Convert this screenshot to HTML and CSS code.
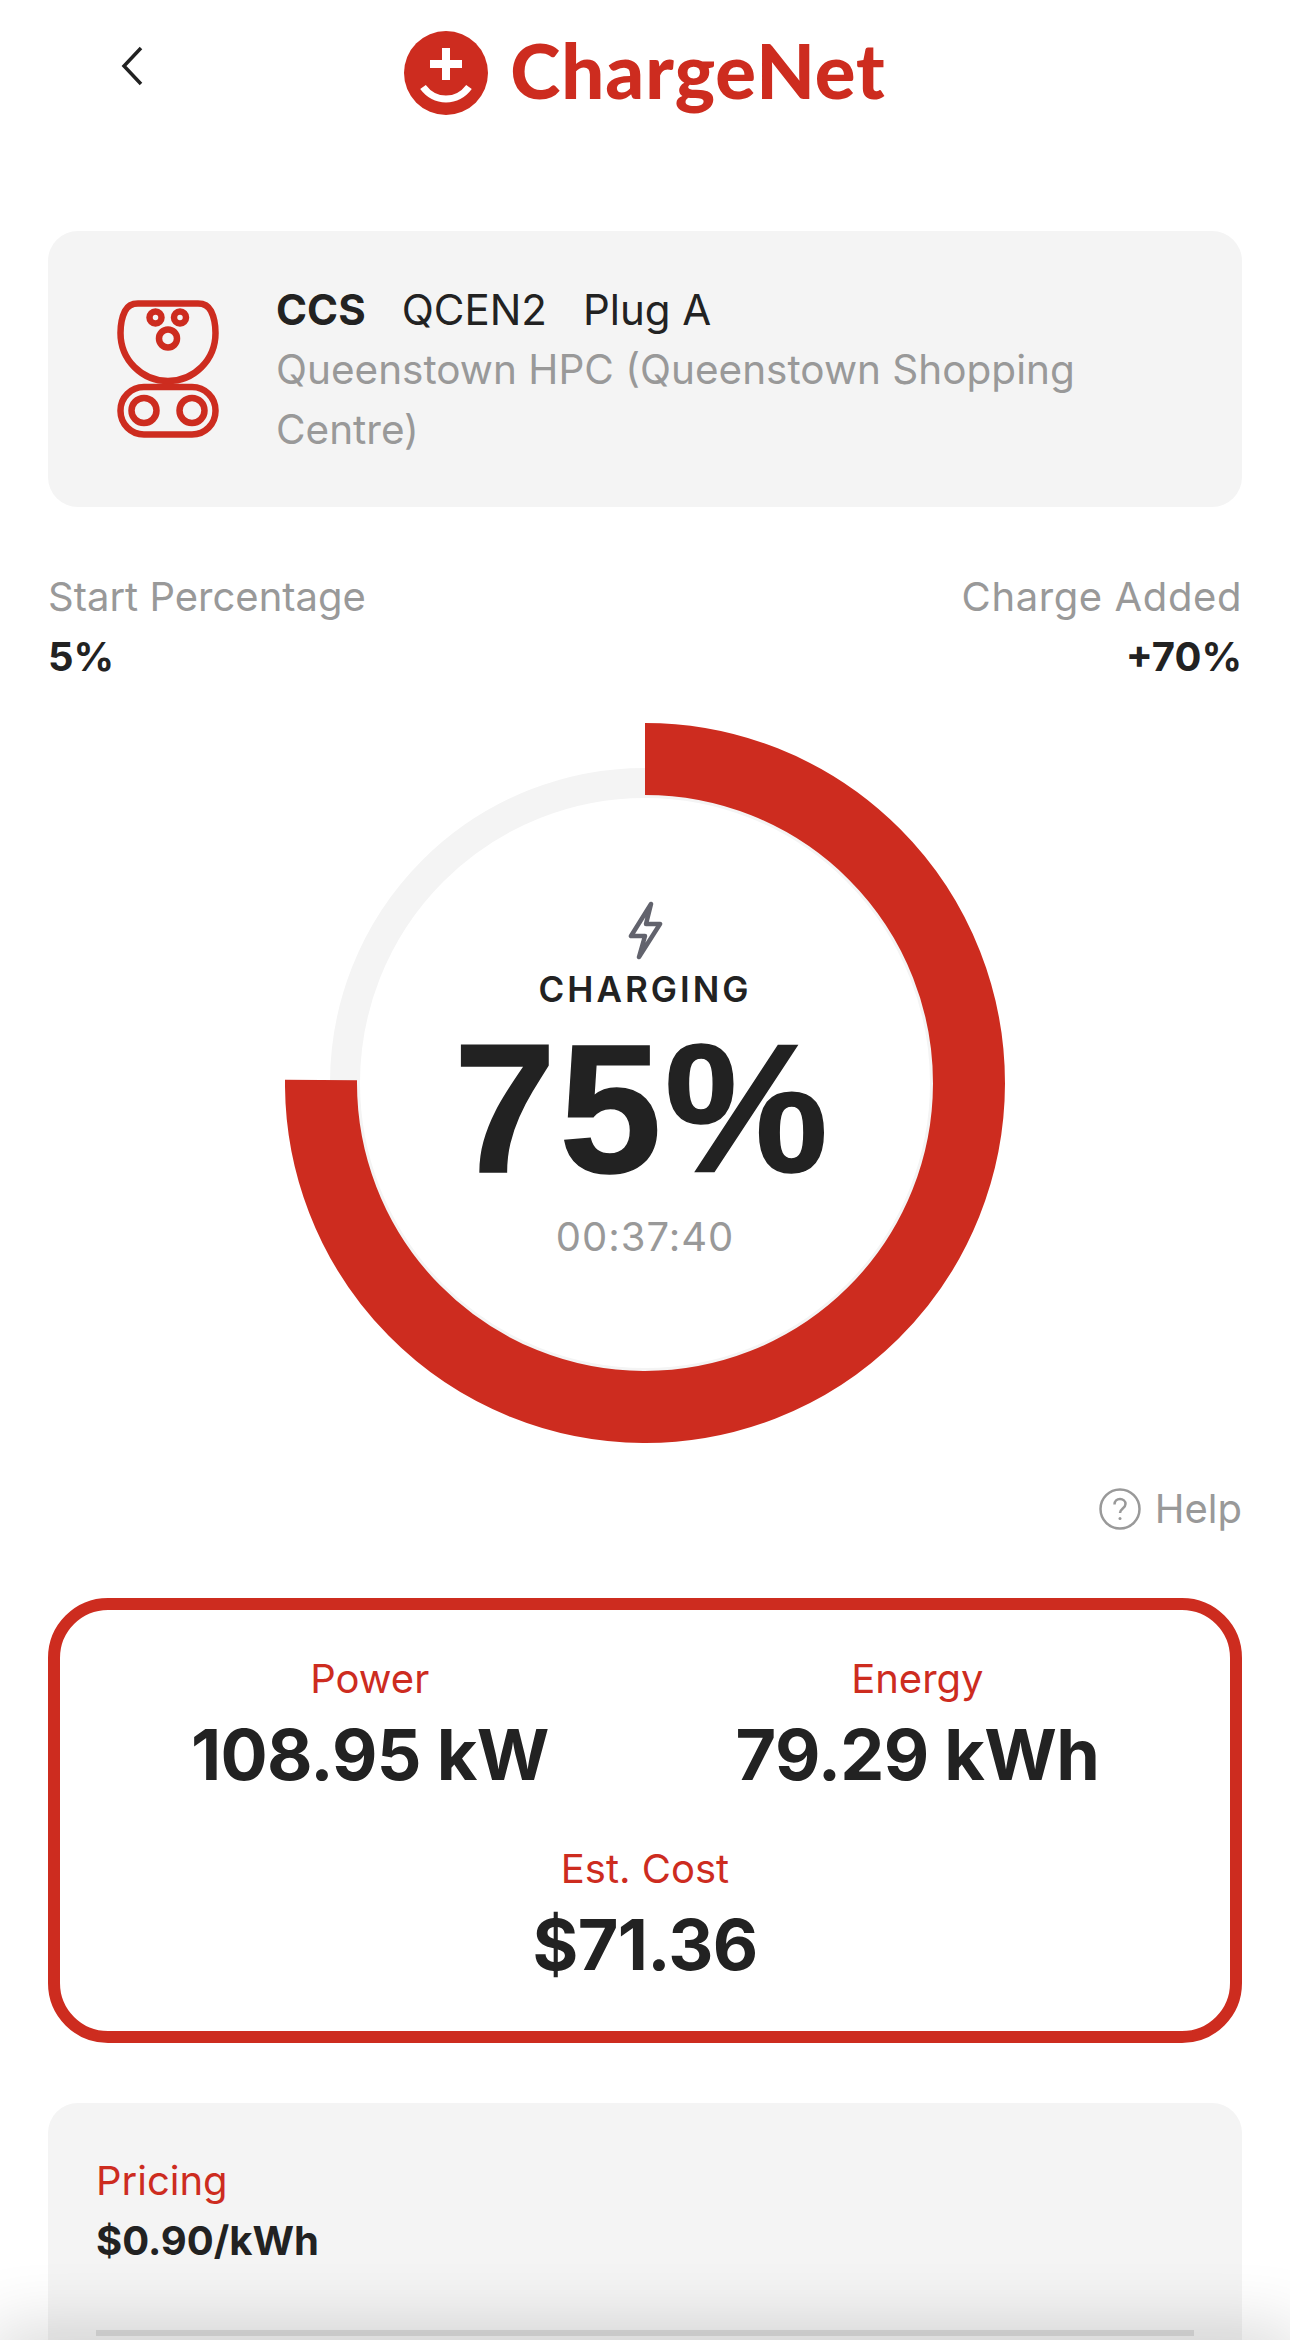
FILE: index.html
```html
<!DOCTYPE html>
<html>
<head>
    <title>ChargeNet</title>
    <link rel="stylesheet" href="styles.css">
</head>
<body>

<div class="page">
    <div class="header">
        <svg class="back" viewBox="0 0 22 40"><path d="M20 2 L3 20 L20 38" /></svg>
        <div class="logo">
            <svg class="logo-mark" viewBox="0 0 84 84">
                <circle cx="42" cy="42" r="42" fill="#cd2c1f" />
                <path d="M38 17h8v12h12v8H46v12h-8V37H26v-8h12z" fill="#fff" />
                <path d="M19 56c6 8 14 12 23 12s17-4 23-12" fill="none" stroke="#fff" stroke-width="7" />
            </svg>
            <span class="logo-text">ChargeNet</span>
        </div>
    </div>

    <div class="card station">
        <svg class="plug" viewBox="0 0 102 138">
            <path d="M21 3.5H81C88 3.5 92 7 94 11C97 17 98.5 24 98.5 33C98.5 60 77 81 51 81C25 81 3.5 60 3.5 33C3.5 24 5 17 8 11C10 7 14 3.5 21 3.5Z" />
            <rect x="3.5" y="87" width="95" height="47.500" rx="23.500" />
            <circle cx="38.500" cy="17.500" r="6" />
            <circle cx="63" cy="17.500" r="6" />
            <circle cx="51" cy="38.500" r="9" />
            <circle cx="27" cy="110.500" r="12.500" />
            <circle cx="75" cy="110.500" r="12.500" />
        </svg>
        <div class="station-info">
            <div class="station-top"><b>CCS</b><span>QCEN2</span><span>Plug A</span></div>
            <div class="station-name">Queenstown HPC (Queenstown Shopping Centre)</div>
        </div>
    </div>

    <div class="stats">
        <div>
            <div class="stat-label">Start Percentage</div>
            <div class="stat-value">5%</div>
        </div>
        <div class="stat-right">
            <div class="stat-label">Charge Added</div>
            <div class="stat-value">+70%</div>
        </div>
    </div>

    <div class="ring">
        <svg class="ring-svg" viewBox="0 0 720 720">
            <circle cx="360" cy="360" r="300" fill="none" stroke="#f4f4f4" stroke-width="30" />
            <path d="M360 36 A324 324 0 1 1 36 357" fill="none" stroke="#cd2c1f" stroke-width="72" />
        </svg>
        <div class="ring-text">
            <svg class="bolt" viewBox="0 0 35 59"><path d="M23 3 L3 35 H17 L11 56 L32 23 H18 Z" /></svg>
            <div class="ring-status">CHARGING</div>
            <div class="ring-percent">75%</div>
            <div class="ring-time">00:37:40</div>
        </div>
    </div>

    <div class="help">
        <svg class="help-icon" viewBox="0 0 42 42">
            <circle cx="21" cy="21" r="19.500" />
            <path d="M15.500 16.500c0-3.500 2.500-5.500 5.500-5.500s5.500 2 5.500 5c0 4.500-5.500 4.500-5.500 9" />
            <circle class="dot" cx="21" cy="30.500" r="1.500" />
        </svg>
        <span>Help</span>
    </div>

    <div class="metrics">
        <div class="metrics-row">
            <div class="metric">
                <div class="metric-label">Power</div>
                <div class="metric-value">108.95 kW</div>
            </div>
            <div class="metric">
                <div class="metric-label">Energy</div>
                <div class="metric-value">79.29 kWh</div>
            </div>
        </div>
        <div class="metrics-row">
            <div class="metric">
                <div class="metric-label">Est. Cost</div>
                <div class="metric-value">$71.36</div>
            </div>
        </div>
    </div>

    <div class="card pricing">
        <div class="pricing-label">Pricing</div>
        <div class="pricing-value">$0.90/kWh</div>
        <div class="pricing-line"></div>
    </div>

    <div class="bottom-fade"></div>
</div>

</body>
</html>
```
FILE: styles.css
```css
* {
    box-sizing: border-box;
}

html, body {
    margin: 0;
    background-color: #fff;
}

body {
    font-family: Inter, "Liberation Sans", sans-serif;
    color: #222;
}

.page {
    position: relative;
    height: 2340px;
    overflow: hidden;
    padding: 0 48px;
}

.header {
    position: relative;
    height: 231px;
    display: flex;
    justify-content: center;
    align-items: flex-start;
}

.back {
    position: absolute;
    left: 72px;
    top: 46px;
    width: 24px;
    height: 40px;
    fill: none;
    stroke: #222;
    stroke-width: 3.5;
}

.logo {
    display: flex;
    align-items: flex-start;
    gap: 22px;
    margin-top: 31px;
}

.logo-mark {
    width: 84px;
    height: 84px;
}

.logo-text {
    font-family: Lato, sans-serif;
    font-weight: 900;
    font-size: 76px;
    line-height: 78px;
    letter-spacing: 1px;
    color: #cd2c1f;
}

.card {
    background-color: #f4f4f4;
    border-radius: 30px;
}

.station {
    height: 276px;
    display: flex;
    padding: 69px 60px 0 69px;
}

.plug {
    width: 102px;
    height: 138px;
    flex: none;
    fill: none;
    stroke: #cd2c1f;
    stroke-width: 6.5;
}

.station-info {
    margin-left: 57px;
    margin-top: -20px;
    font-size: 40.5px;
    line-height: 60px;
}

.station-top {
    display: flex;
    gap: 36px;
    font-size: 42px;
}

.station-name {
    color: #999;
}

.stats {
    display: flex;
    justify-content: space-between;
    margin-top: 60px;
    font-size: 40px;
    line-height: 60px;
}

.stat-right {
    text-align: right;
}

.stat-right .stat-label {
    letter-spacing: 0.6px;
}

.stat-label {
    color: #999;
}

.stat-value {
    font-weight: 700;
    font-size: 40px;
}

.ring {
    display: grid;
    justify-content: center;
    margin-top: 36px;
}

.ring-svg,
.ring-text {
    grid-area: 1 / 1;
}

.ring-svg {
    width: 720px;
    height: 720px;
}

.ring-text {
    display: flex;
    flex-direction: column;
    align-items: center;
    padding-top: 178px;
}

.bolt {
    width: 35px;
    height: 59px;
    fill: none;
    stroke: #62636d;
    stroke-width: 4.5;
    stroke-linejoin: round;
}

.ring-status {
    margin-top: 7px;
    font-size: 35px;
    line-height: 44px;
    font-weight: 600;
    letter-spacing: 3px;
}

.ring-percent {
    margin-top: 12px;
    margin-right: 5px;
    font-family: "Liberation Sans", sans-serif;
    font-size: 184px;
    line-height: 170px;
    font-weight: 700;
    letter-spacing: 3px;
    -webkit-text-stroke: 1.5px #222;
}

.ring-time {
    margin-top: 19px;
    font-size: 40px;
    line-height: 50px;
    color: #999;
    letter-spacing: 1px;
}

.help {
    display: flex;
    justify-content: flex-end;
    align-items: center;
    gap: 14px;
    margin-top: 41px;
    font-size: 40px;
    line-height: 50px;
    color: #999;
}

.help-icon {
    width: 42px;
    height: 42px;
    fill: none;
    stroke: #999;
    stroke-width: 2.5;
}

.help-icon .dot {
    fill: #999;
    stroke: none;
}

.metrics {
    height: 445px;
    margin-top: 64px;
    padding-top: 44px;
    border: 12px solid #cd2c1f;
    border-radius: 60px;
    text-align: center;
}

.metrics-row {
    display: flex;
    justify-content: center;
    gap: 187px;
    height: 190px;
}

.metric-label {
    font-size: 40px;
    line-height: 50px;
    color: #cd2c1f;
}

.metric-value {
    margin-top: 9px;
    font-size: 70px;
    line-height: 84px;
    font-weight: 700;
    letter-spacing: -0.7px;
}

.pricing {
    height: 300px;
    margin-top: 60px;
    padding: 48px 48px 0;
    font-size: 40px;
    line-height: 60px;
}

.pricing-label {
    color: #cd2c1f;
}

.pricing-value {
    font-weight: 700;
}

.pricing-line {
    height: 6px;
    margin-top: 59px;
    background-color: #dcdcdc;
}

.bottom-fade {
    position: absolute;
    left: 0;
    right: 0;
    bottom: -60px;
    height: 60px;
    box-shadow: 0 0 70px 10px rgba(0, 0, 0, 0.16);
}
```
